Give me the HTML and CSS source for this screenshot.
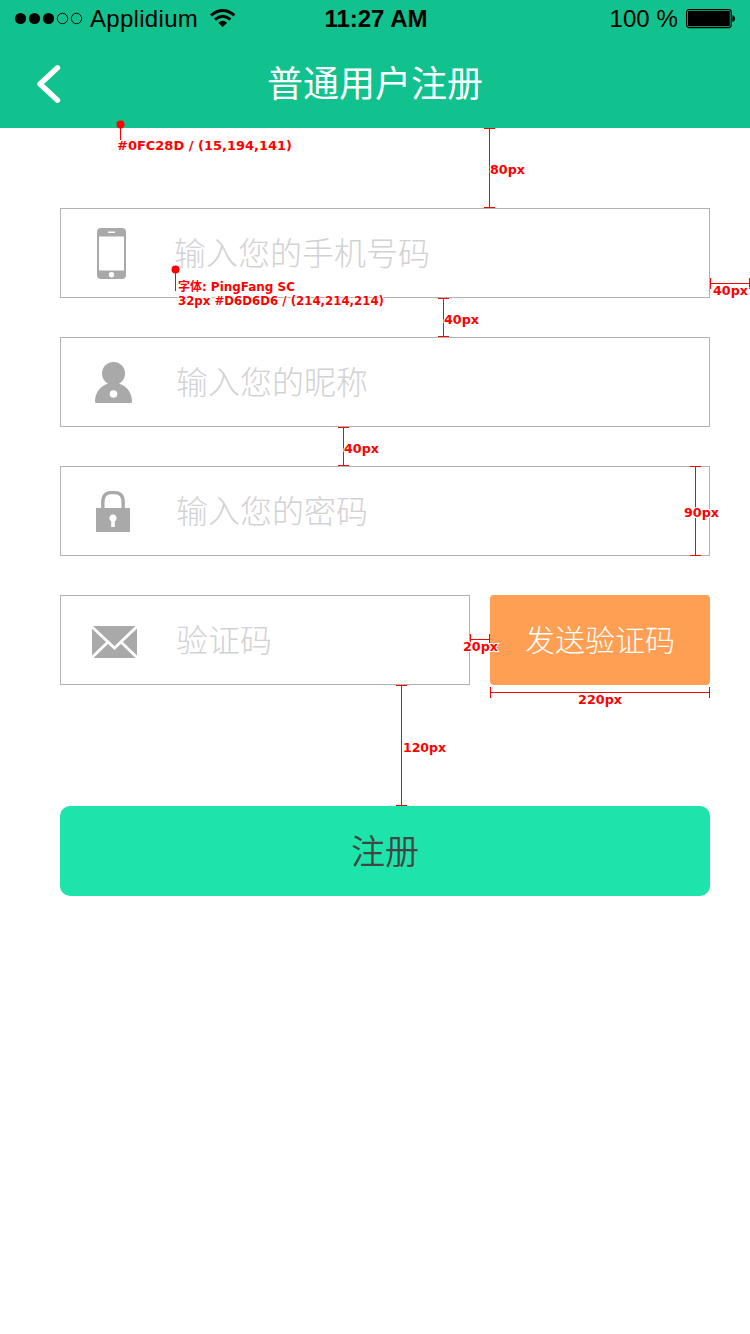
FILE: index.html
```html
<!DOCTYPE html>
<html lang="zh-CN">
<head>
<meta charset="utf-8">
<title>普通用户注册</title>
<link rel="stylesheet" href="styles.css">
</head>
<body>
<main class="screen">
  <header class="header">
    <div class="status">
      <div class="carrier">
        <svg class="signal" width="70" height="14" viewBox="0 0 70 14"><circle cx="6.5" cy="6.5" r="5.6"/><circle cx="20.5" cy="6.5" r="5.6"/><circle cx="34.5" cy="6.5" r="5.6"/><g fill="none" stroke="#000"><circle cx="48.5" cy="6.5" r="5.2"/><circle cx="62.5" cy="6.5" r="5.2"/></g></svg>
        <span class="carrier-name">Applidium</span>
        <svg class="wifi" width="26" height="20" viewBox="0 0 26 20"><g fill="none" stroke="#000" stroke-width="2.9"><path d="M1 6.4Q12.7-3.4 24.4 6.4"/><path d="M5 10.6Q12.7 4 20.4 10.6"/></g><path d="M8.3 13.7Q12.7 10 17.1 13.7L12.7 18Z"/></svg>
      </div>
      <span class="time">11:27 AM</span>
      <div class="power">
        <span>100 %</span>
        <svg width="50" height="20" viewBox="0 0 50 20"><rect x=".6" y=".6" width="44.6" height="18" rx="2.5" fill="none" stroke="#000" stroke-width="1.2"/><rect x="2" y="2" width="41.8" height="15.2" rx="1"/><path d="M46.3 6.2Q49 6.8 49 9.6Q49 12.4 46.3 13Z"/></svg>
      </div>
    </div>
    <nav class="nav">
      <svg class="back" width="26" height="40" viewBox="0 0 26 40"><path d="M20.5 3.8L3 20L20.5 36.2" fill="none" stroke="#fff" stroke-width="5.4" stroke-linecap="round" stroke-linejoin="round"/></svg>
      <h1 class="title">普通用户注册</h1>
      <span class="nav-space"></span>
    </nav>
  </header>
  <form class="form">
    <label class="field">
      <span class="icon phone-icon"><svg width="29" height="51" viewBox="0 0 29 51"><path fill="#a9a9a9" fill-rule="evenodd" d="M4 0H25Q29 0 29 4V47Q29 51 25 51H4Q0 51 0 47V4Q0 0 4 0ZM2 8.5V42.5H27V8.5ZM11 3.5V5H18V3.5ZM14.5 44A2.7 2.7 0 1 0 14.5 49.4A2.7 2.7 0 1 0 14.5 44Z"/></svg></span>
      <span class="placeholder phone">输入您的手机号码</span>
    </label>
    <label class="field">
      <span class="icon nick-icon"><svg width="37" height="42" viewBox="0 0 37 42"><g fill="#a9a9a9"><circle cx="18.5" cy="11.5" r="11.5"/><path d="M10.5 22.5Q18.5 19.5 26.5 22.5C34 26 37 33 37 39.5Q37 41 35.5 41H1.5Q0 41 0 39.5C0 33 3 26 10.5 22.5Z"/></g><circle cx="18.5" cy="32" r="3.8" fill="#fff"/></svg></span>
      <span class="placeholder nick">输入您的昵称</span>
    </label>
    <label class="field">
      <span class="icon"><svg width="34" height="42" viewBox="0 0 34 42"><path d="M6.8 18V12.5Q6.8 2.6 15 2.6H19Q27.2 2.6 27.2 12.5V18" fill="none" stroke="#a9a9a9" stroke-width="3.4"/><path fill="#a9a9a9" d="M0 18H34V42H0Z"/><path fill="#fff" d="M15.2 31.3A3.6 3.6 0 1 1 18.8 31.3V37H15.2Z"/></svg></span>
      <span class="placeholder">输入您的密码</span>
    </label>
    <div class="code-row">
      <label class="field">
        <span class="icon mail-icon"><svg width="45" height="32" viewBox="0 0 45 32"><path fill="#a9a9a9" d="M0 0H45V32H0Z"/><path d="M-1 0L22.5 22L46-0.5M15.5 16.5L-.5 32M29.5 16.5L45.5 32" fill="none" stroke="#fff" stroke-width="2.8"/></svg></span>
        <span class="placeholder code">验证码</span>
      </label>
      <button class="send" type="button">发送验证码</button>
    </div>
    <button class="submit" type="button">注册</button>
  </form>
  <svg class="notes" width="750" height="1334" viewBox="0 0 750 1334">
    <g class="rule">
      <path d="M120.5 125V140M175.5 270V291"/>
      <path d="M484 128.5H495M484 207.5H495M489.5 128V208"/>
      <path d="M438 298.5H449M438 336.5H449M443.5 298V337"/>
      <path d="M338 427.5H349M338 465.5H349M343.5 427V466"/>
      <path d="M690 466.5H701M690 555.5H701M695.5 466V556"/>
      <path d="M396 685.5H407M396 805.5H407M401.5 685V806"/>
      <path d="M710.5 278V289M749.5 278V289M710 283.5H750"/>
      <path d="M470.5 634V645M489.5 634V645M470 639.5H490"/>
      <path d="M490.5 687V698M709.5 687V698M490 692.5H710"/>
    </g>
    <g class="pin"><circle cx="120.5" cy="124.5" r="4"/><circle cx="175.5" cy="269.5" r="4"/></g>
    <g class="note">
      <text x="117" y="150" textLength="175" lengthAdjust="spacingAndGlyphs">#0FC28D / (15,194,141)</text>
      <text x="490" y="174" textLength="35" lengthAdjust="spacingAndGlyphs">80px</text>
      <text x="178" y="291" textLength="117" lengthAdjust="spacingAndGlyphs">字体: PingFang SC</text>
      <text x="178" y="305" textLength="206" lengthAdjust="spacingAndGlyphs">32px #D6D6D6 / (214,214,214)</text>
      <text x="713" y="295" textLength="35" lengthAdjust="spacingAndGlyphs">40px</text>
      <text x="444" y="324" textLength="35" lengthAdjust="spacingAndGlyphs">40px</text>
      <text x="344" y="453" textLength="35" lengthAdjust="spacingAndGlyphs">40px</text>
      <text x="684" y="517" textLength="35" lengthAdjust="spacingAndGlyphs">90px</text>
      <text x="463" y="651" textLength="35" lengthAdjust="spacingAndGlyphs">20px</text>
      <text x="578" y="704" textLength="44" lengthAdjust="spacingAndGlyphs">220px</text>
      <text x="403" y="752" textLength="43" lengthAdjust="spacingAndGlyphs">120px</text>
    </g>
  </svg>
</main>
</body>
</html>
```
FILE: styles.css
```css
* { box-sizing: border-box; }
body { margin: 0; background: #fff; font-family: "Liberation Sans", "Noto Sans CJK SC", sans-serif; }
svg { display: block; flex: none; }
.screen { position: relative; width: 750px; height: 1334px; overflow: hidden; }
.header { height: 128px; background: #11c28e; color: #000; }
.status { height: 40px; display: grid; grid-template-columns: 1fr auto 1fr; padding: 0 14px 0 14px; font-size: 24px; line-height: 38px; }
.carrier { display: flex; align-items: center; height: 37px; }
.carrier-name { margin-left: 6px; letter-spacing: .3px; }
.wifi { margin-left: 12px; }
.time { font-weight: bold; font-size: 24px; padding-left: 2px; }
.power { display: flex; justify-content: flex-end; align-items: center; height: 37px; gap: 8px; letter-spacing: .1px; }
.nav { height: 88px; display: flex; justify-content: space-between; align-items: center; padding: 0 37px; }
.title { margin: 0; padding-bottom: 7px; color: #fff; font: 400 36px/52px "Noto Sans CJK SC", sans-serif; }
.nav-space { width: 26px; }
.form { display: flex; flex-direction: column; gap: 39px; padding: 80px 40px 0 60px; }
.field { height: 90px; display: flex; align-items: center; border: 1px solid #b2b2b2; background: #fff; }
.icon { width: 37px; margin-left: 33px; display: flex; justify-content: center; }
.icon svg { margin-left: 1px; }
.phone-icon { margin-left: 31px; margin-right: 2px; }
.nick-icon { margin-left: 34px; }
.nick-icon svg { margin: 1px 0 0; }
.mail-icon { width: 45px; margin: 3px -5px 0 31px; }
.mail-icon svg { margin-left: 0; }
.placeholder { margin-left: 45px; padding-bottom: 4px; color: #d2d2d2; font: 300 32px/48px "Noto Sans CJK SC", sans-serif; }
.placeholder.phone { margin-left: 43px; }
.placeholder.nick,
.placeholder.code { margin-left: 44px; }
.code-row { display: flex; gap: 20px; }
.code-row .field { width: 410px; }
.send { width: 220px; height: 90px; padding: 0 0 5px; border: 0; border-radius: 4px; background: #ff9f54; color: #fff; font: 300 30px/44px "Noto Sans CJK SC", sans-serif; }
.submit { height: 90px; margin-top: 82px; padding: 0 0 3px; border: 0; border-radius: 10px; background: #1de4ab; color: #444; font: 350 34px/50px "Noto Sans CJK SC", sans-serif; }
.notes { position: absolute; left: 0; top: 0; pointer-events: none; }
.rule { fill: none; stroke: #f00; stroke-width: 1px; shape-rendering: crispEdges; }
.pin { fill: #f00; }
.note { fill: #f00; stroke: #fff; stroke-width: 2px; paint-order: stroke; font: bold 12px "DejaVu Sans", "Noto Sans CJK SC", sans-serif; }
```
